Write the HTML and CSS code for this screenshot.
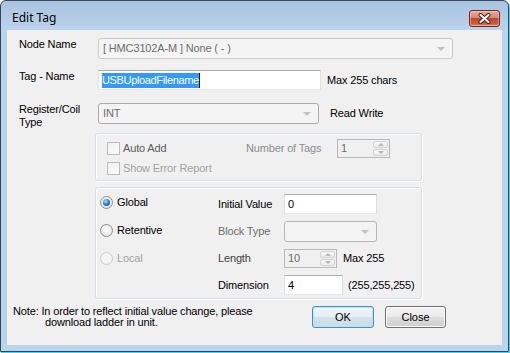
FILE: index.html
```html
<!DOCTYPE html>
<html lang="en">
<head>
    <meta charset="UTF-8">
    <title>Edit Tag</title>
    <link rel="stylesheet" href="styles.css">
</head>
<body>
    <div class="window">
        <!-- Barra de titulo -->
        <div class="titlebar">
            <span class="title">Edit Tag</span>
            <button class="close-btn" aria-label="Close">
                <svg width="13" height="11" viewBox="0 0 13 11">
                    <path d="M2.5 2 L10.5 9 M10.5 2 L2.5 9" stroke="#4a1810" stroke-width="4" stroke-linecap="round"/>
                    <path d="M2.5 2 L10.5 9 M10.5 2 L2.5 9" stroke="#ffffff" stroke-width="2.2" stroke-linecap="round"/>
                </svg>
            </button>
        </div>

        <div class="client">
            <div class="row">
                <span class="field-label">Node Name</span>
                <div class="combo combo-node disabled">
                    <span class="combo-text">[ HMC3102A-M ] None ( - )</span>
                    <span class="arrow"></span>
                </div>
            </div>

            <div class="row row-tag">
                <span class="field-label">Tag - Name</span>
                <div class="textbox textbox-tag">
                    <span class="selected">USBUploadFilename</span>
                </div>
                <span class="hint">Max 255 chars</span>
            </div>

            <div class="row row-type">
                <span class="field-label">Register/Coil<br>Type</span>
                <div class="combo combo-type disabled">
                    <span class="combo-text">INT</span>
                    <span class="arrow"></span>
                </div>
                <span class="hint hint-rw">Read Write</span>
            </div>

            <!-- Auto Add -->
            <div class="group group-auto">
                <div class="auto-row">
                    <div class="check-item">
                        <span class="checkbox"></span>
                        <span class="auto-text">Auto Add</span>
                    </div>
                    <span class="tags-label">Number of Tags</span>
                    <div class="spin spin-tags">
                        <span class="spin-text">1</span>
                        <span class="spin-btns">
                            <span class="spin-up"></span>
                            <span class="spin-down"></span>
                        </span>
                    </div>
                </div>
                <div class="check-item error-row">
                    <span class="checkbox"></span>
                    <span class="muted">Show Error Report</span>
                </div>
            </div>

            <!-- Ambito y valores -->
            <div class="group group-scope">
                <div class="radio-col">
                    <div class="radio-item">
                        <span class="radio checked"></span>
                        <span>Global</span>
                    </div>
                    <div class="radio-item">
                        <span class="radio"></span>
                        <span>Retentive</span>
                    </div>
                    <div class="radio-item">
                        <span class="radio radio-off"></span>
                        <span class="muted">Local</span>
                    </div>
                </div>
                <div class="value-col">
                    <div class="value-row">
                        <span class="value-label">Initial Value</span>
                        <div class="textbox textbox-init"><span>0</span></div>
                    </div>
                    <div class="value-row">
                        <span class="value-label gray">Block Type</span>
                        <div class="combo combo-block disabled">
                            <span class="combo-text"></span>
                            <span class="arrow"></span>
                        </div>
                    </div>
                    <div class="value-row">
                        <span class="value-label dim">Length</span>
                        <div class="spin spin-length">
                            <span class="spin-text">10</span>
                            <span class="spin-btns">
                                <span class="spin-up"></span>
                                <span class="spin-down"></span>
                            </span>
                        </div>
                        <span class="value-hint">Max 255</span>
                    </div>
                    <div class="value-row">
                        <span class="value-label">Dimension</span>
                        <div class="textbox textbox-dim"><span>4</span></div>
                        <span class="value-hint hint-dim">(255,255,255)</span>
                    </div>
                </div>
            </div>

            <div class="bottom">
                <div class="note">
                    <div>Note: In order to reflect initial value change, please</div>
                    <div class="note-second">download ladder in unit.</div>
                </div>
                <div class="buttons">
                    <button class="btn btn-default">OK</button>
                    <button class="btn">Close</button>
                </div>
            </div>
        </div>
    </div>
</body>
</html>
```

FILE: styles.css
```css
* {
    box-sizing: border-box;
    margin: 0;
    padding: 0;
}

body {
    width: 510px;
    height: 353px;
    background-color: #ffffff;
    font-family: 'Liberation Sans', Arial, sans-serif;
    font-size: 11px;
    line-height: 13px;
    letter-spacing: -0.15px;
    color: #000;
    overflow: hidden;
}

.window {
    width: 509px;
    height: 352px;
    border: 1px solid #34475c;
    border-radius: 6px 6px 0 0;
    background: linear-gradient(#a9c3df, #bcd3ec 30px, #bcd3ec);
    box-shadow: 1px 1px 0 #3fd8ee;
    padding: 0 6px 6px 6px;
    display: flex;
    flex-direction: column;
}

.titlebar {
    height: 29px;
    display: flex;
    align-items: flex-start;
    justify-content: space-between;
}

.title {
    font-family: 'Noto Sans', 'Open Sans', sans-serif;
    font-size: 12px;
    line-height: 16px;
    letter-spacing: 0;
    padding: 9px 0 0 5px;
    color: #000;
}

.close-btn {
    width: 31px;
    height: 17px;
    margin: 9px 2px 0 0;
    border: 1px solid #6f2a20;
    border-radius: 3px;
    background: linear-gradient(#e9ab9c, #d88573 45%, #c2472f 50%, #cd5c3c 85%, #dc8d6c);
    box-shadow: inset 0 0 0 1px rgba(255, 220, 210, 0.45);
    display: flex;
    align-items: center;
    justify-content: center;
}

.client {
    flex: 1;
    background-color: #f0f0f0;
    padding: 0 0 0 12px;
}

.row {
    display: flex;
    align-items: flex-start;
    margin-top: 8px;
}

.row-tag {
    margin-top: 11px;
}

.row-type {
    margin-top: 13px;
    height: 21px;
}

.field-label {
    width: 79px;
}

.hint {
    align-self: center;
    margin-left: 6px;
}

.hint-rw {
    margin-left: 11px;
}

/* Controles */
.combo {
    height: 21px;
    border: 1px solid #b9b9b9;
    border-radius: 3px;
    display: flex;
    align-items: center;
    justify-content: space-between;
    padding: 0 7px 0 4px;
}

.combo.disabled {
    background-color: #f4f4f4;
    color: #6d6d6d;
}

.combo-node {
    width: 355px;
    border-color: #c9c9c9;
}

.combo-type {
    width: 221px;
    border-color: #acacac;
}

.combo-block {
    width: 93px;
    border-color: #b5b5b5;
}

.arrow {
    width: 0;
    height: 0;
    border-left: 4px solid transparent;
    border-right: 4px solid transparent;
    border-top: 4px solid #c2c2c2;
    margin-top: 1px;
}

.textbox {
    height: 20px;
    background-color: #fff;
    border: 1px solid;
    border-color: #abadb3 #dbdfe6 #e3e9ef #e2e3ea;
    display: flex;
    align-items: center;
    padding-left: 3px;
}

.textbox-tag {
    width: 223px;
}

.selected {
    background-color: #3399ff;
    color: #fff;
    line-height: 15px;
    letter-spacing: -0.35px;
    border-right: 1px solid #1a1a1a;
}

.textbox-init {
    width: 93px;
}

.textbox-dim {
    width: 59px;
}

.spin {
    height: 19px;
    border: 1px solid #b9b9b9;
    background-color: #f0f0f0;
    color: #6d6d6d;
    display: flex;
    justify-content: space-between;
    padding: 1px 1px 1px 3px;
}

.spin-tags {
    width: 53px;
}

.spin-length {
    width: 53px;
}

.spin-text {
    line-height: 15px;
}

.spin-btns {
    width: 15px;
    display: flex;
    flex-direction: column;
    gap: 1px;
}

.spin-up,
.spin-down {
    flex: 1;
    border: 1px solid #d3d3d3;
    border-radius: 2px;
    background: linear-gradient(#f7f7f7, #ececec);
    display: flex;
    align-items: center;
    justify-content: center;
}

.spin-up::after {
    content: "";
    border-left: 3px solid transparent;
    border-right: 3px solid transparent;
    border-bottom: 3px solid #b8b8b8;
}

.spin-down::after {
    content: "";
    border-left: 3px solid transparent;
    border-right: 3px solid transparent;
    border-top: 3px solid #b8b8b8;
}

/* Grupos */
.group {
    width: 327px;
    margin-left: 76px;
    border: 1px solid #d5dfe5;
    border-radius: 3px;
    box-shadow: inset 1px 1px 0 #fff, 1px 1px 0 #fff;
}

.group-auto {
    height: 48px;
    margin-top: 9px;
    padding: 5px 0 0 11px;
}

.auto-row {
    display: flex;
    align-items: center;
    height: 19px;
}

.check-item {
    width: 139px;
    display: flex;
    align-items: center;
    gap: 3px;
}

.error-row {
    margin-top: 4px;
}

.checkbox {
    width: 13px;
    height: 13px;
    border: 1px solid #bcbcbc;
    background: linear-gradient(135deg, #f0f0f0, #fbfbfb);
}

.auto-text {
    color: #5c5c5c;
}

.muted {
    color: #a2a2a2;
}

.tags-label {
    width: 91px;
    color: #8c8c8c;
}

.group-scope {
    height: 112px;
    margin-top: 6px;
    display: flex;
}

.radio-col {
    width: 122px;
    padding-left: 4px;
}

.radio-item {
    height: 28px;
    display: flex;
    align-items: center;
    gap: 4px;
}

.radio {
    width: 13px;
    height: 13px;
    border-radius: 50%;
    border: 1px solid #8e8f8f;
    background: radial-gradient(circle at 50% 40%, #ffffff, #dcdcdc);
    display: flex;
    align-items: center;
    justify-content: center;
}

.radio.checked::after {
    content: "";
    width: 7px;
    height: 7px;
    border-radius: 50%;
    background: radial-gradient(circle at 40% 35%, #9fe0ff, #1e78c8 55%, #0d3f7a);
}

.radio-off {
    border-color: #cbcbcb;
    background: #f4f4f4;
}

.value-col {
    padding-top: 6px;
    display: flex;
    flex-direction: column;
    gap: 7px;
}

.value-row {
    display: flex;
    align-items: center;
}

.value-label {
    width: 66px;
}

.value-label.gray {
    color: #6d6d6d;
}

.value-label.dim {
    color: #404040;
}

.value-hint {
    margin-left: 6px;
}

.hint-dim {
    margin-left: 5px;
}

/* Pie */
.bottom {
    display: flex;
    margin-top: 7px;
}

.note {
    width: 299px;
    margin-left: -6px;
    line-height: 11px;
}

.note-second {
    padding-left: 32px;
}

.buttons {
    display: flex;
    gap: 11px;
}

.btn {
    width: 61px;
    height: 22px;
    font-family: 'Liberation Sans', Arial, sans-serif;
    font-size: 11px;
    color: #000;
    border: 1px solid #707070;
    border-radius: 3px;
    background: linear-gradient(#f2f2f2, #ebebeb 50%, #dddddd 50%, #cfcfcf);
    box-shadow: inset 0 0 0 1px #fcfcfc;
}

.btn-default {
    width: 62px;
    border-color: #3c8fd6;
    background: linear-gradient(#f1f6f9, #e5eef4 50%, #d5e3ec 50%, #c9dbe6);
    box-shadow: inset 0 0 0 1px #b9e6fb;
}
```
